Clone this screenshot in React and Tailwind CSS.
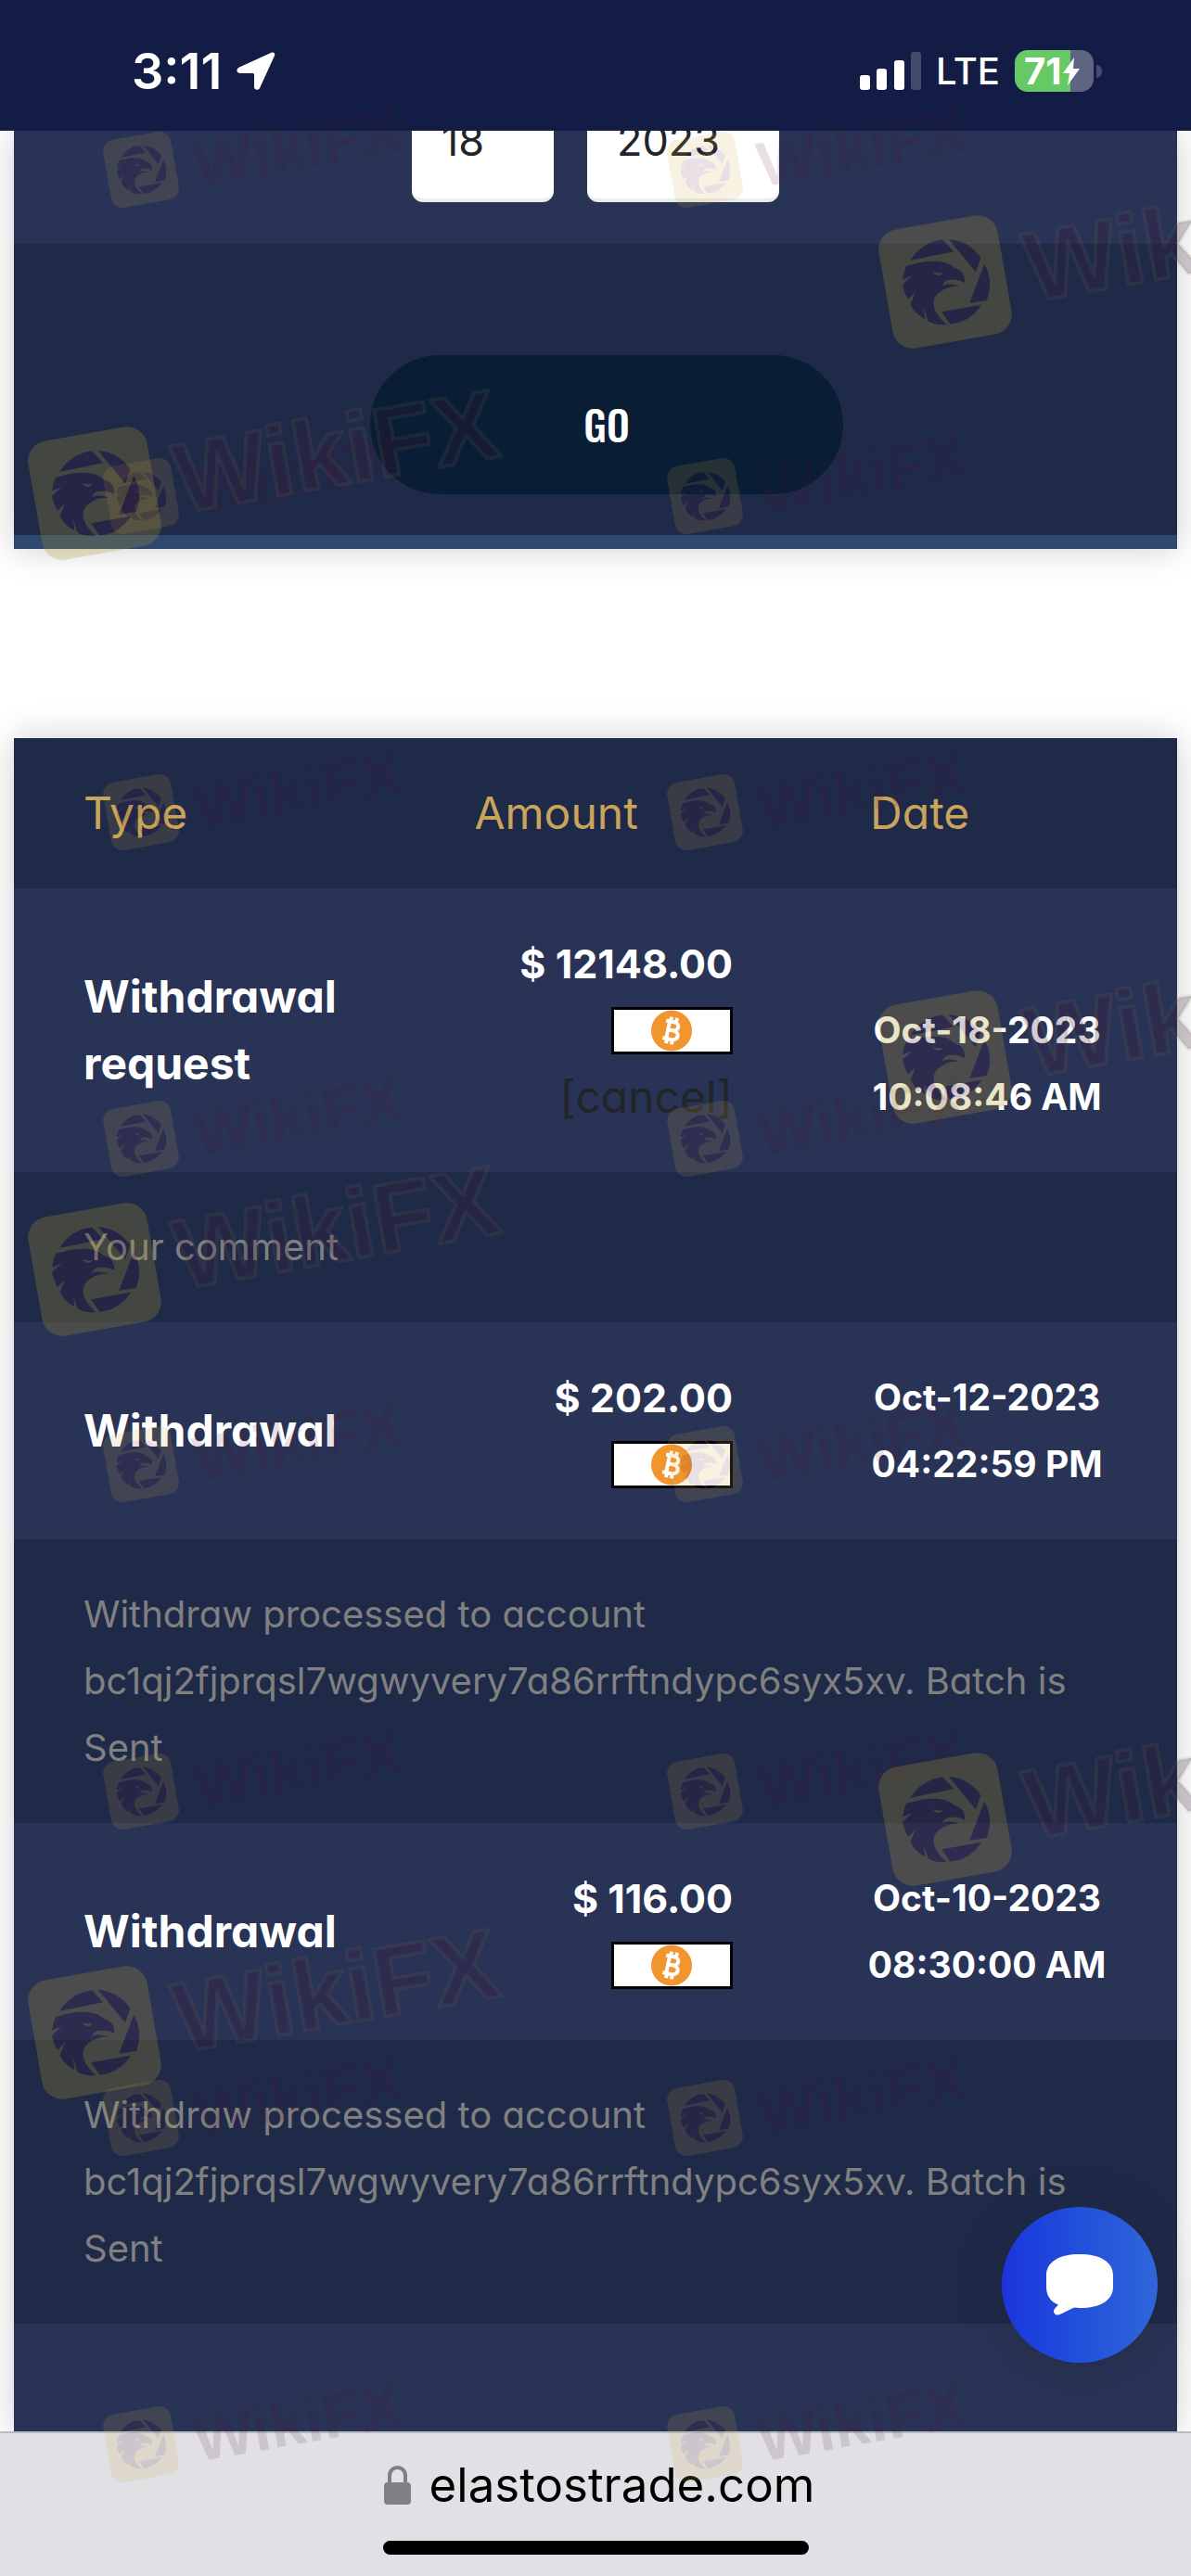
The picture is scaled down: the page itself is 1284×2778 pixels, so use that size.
import { Fragment } from "react";

const withdrawals = [
  {
    type: "Withdrawal request",
    amount: "$ 12148.00",
    date: "Oct-18-2023",
    time: "10:08:46 AM",
    pending: true,
    comment: "Your comment",
  },
  {
    type: "Withdrawal",
    amount: "$ 202.00",
    date: "Oct-12-2023",
    time: "04:22:59 PM",
    comment:
      "Withdraw processed to account bc1qj2fjprqsl7wgwyvery7a86rrftndypc6syx5xv. Batch is Sent",
  },
  {
    type: "Withdrawal",
    amount: "$ 116.00",
    date: "Oct-10-2023",
    time: "08:30:00 AM",
    comment:
      "Withdraw processed to account bc1qj2fjprqsl7wgwyvery7a86rrftndypc6syx5xv. Batch is Sent",
  },
];

const smallMarks = [183, 535, 876, 1228, 1579, 1932, 2284, 2636].flatMap((y) => [
  { x: 152, y },
  { x: 760, y },
]);

const largeMarks = [
  { x: 1019, y: 304 },
  { x: 102, y: 532 },
  { x: 1019, y: 1140 },
  { x: 102, y: 1369 },
  { x: 1019, y: 1962 },
  { x: 102, y: 2192 },
];

function StatusBar() {
  return (
    <header className="flex h-[141px] shrink-0 items-center justify-between bg-[#131c44] pr-24 pl-[142px] pt-3 text-white">
      <div className="flex items-center gap-4">
        <span className="text-[54px] leading-none font-semibold">3:11</span>
        <svg viewBox="0 0 42 42" className="h-[42px] w-[42px]" aria-hidden="true">
          <path
            d="M41 4 25 39c-1.500 3-6 2-6-1V25c0-1.500-.5-2-2-2H4c-4 0-5-4.500-1-6.500L37 1c3-1.200 5 .5 4 3z"
            fill="#fff"
          />
        </svg>
      </div>
      <div className="flex items-center gap-4">
        <svg viewBox="0 0 66 42" className="h-[42px] w-[66px]" aria-hidden="true">
          <rect x="0" y="25" width="11" height="16" rx="3" fill="#fff" />
          <rect x="18" y="18" width="11" height="23" rx="3" fill="#fff" />
          <rect x="37" y="9" width="11" height="32" rx="3" fill="#fff" />
          <rect x="55" y="0" width="11" height="41" rx="3" fill="#454b6b" />
        </svg>
        <span className="text-[40px] leading-none font-medium">LTE</span>
        <div className="flex items-center gap-[3px]">
          <div className="flex h-[45px] w-[85px] items-center rounded-[14px] bg-[linear-gradient(90deg,#66c966_71%,#5f6482_71%)] pl-2.5">
            <span className="text-[40px] leading-none font-bold">71</span>
            <svg viewBox="0 0 20 30" className="h-[30px] w-5 shrink-0" aria-hidden="true">
              <path d="M13 0 1 17h7L6 30 19 12h-7z" fill="#fff" />
            </svg>
          </div>
          <span className="h-[14px] w-[6px] rounded-r-full bg-[#454b6b]" />
        </div>
      </div>
    </header>
  );
}

function DateForm() {
  return (
    <form
      className="mx-[15px] shadow-[0_0_36px_rgba(0,0,0,0.2)]"
      onSubmit={(e) => e.preventDefault()}
    >
      <div className="flex h-[122px] items-end justify-center gap-9 overflow-hidden bg-[#293356] pb-[45px]">
        <select
          aria-label="Day"
          defaultValue="18"
          className="h-32 w-[153px] shrink-0 appearance-none rounded-xl border-b-4 border-[#ececec] bg-white pl-8 text-[45px] text-[#212529]"
        >
          <option>18</option>
        </select>
        <select
          aria-label="Year"
          defaultValue="2023"
          className="h-32 w-[207px] shrink-0 appearance-none rounded-xl border-b-4 border-[#ececec] bg-white pl-8 text-[45px] text-[#212529]"
        >
          <option>2023</option>
        </select>
      </div>
      <div className="flex justify-center border-b-[15px] border-[#2f486f] bg-[#1f2a49] pt-[120px] pb-11 pl-6">
        <button
          type="submit"
          className="h-[150px] w-[510px] rounded-full bg-[#091d35] font-['Oswald','Liberation_Sans_Narrow','Roboto_Condensed',sans-serif] text-[44px] font-medium text-white"
        >
          GO
        </button>
      </div>
    </form>
  );
}

function BitcoinBadge() {
  return (
    <svg viewBox="0 0 131 51" className="h-[51px] w-[131px]" role="img" aria-label="Bitcoin">
      <rect x="1.500" y="1.500" width="128" height="48" fill="#fff" stroke="#000" strokeWidth="3" />
      <circle cx="65" cy="25.500" r="22" fill="#f2952f" />
      <g transform="rotate(12 65 25.500)" fill="none" stroke="#fff" strokeWidth="4">
        <path d="M57 16h9c7 0 7 9 0 9h-5m5 0c9 0 9 10 0 10h-9M61 16v19M62 11v5M68 11v5M62 35v5M68 35v5" />
      </g>
    </svg>
  );
}

function HistoryTable() {
  return (
    <section className="mx-[15px] mt-[204px] flex-1 bg-[#293356] shadow-[0_0_36px_rgba(0,0,0,0.2)]">
      <table className="w-full table-fixed border-collapse leading-[72px]">
        <colgroup>
          <col className="w-[36%]" />
          <col className="w-[29%]" />
          <col className="w-[35%]" />
        </colgroup>
        <thead className="bg-[#1f2a49] text-left text-[48px] text-[#c9a45c]">
          <tr>
            <th className="py-[45px] pl-[75px] font-normal">Type</th>
            <th className="px-[45px] py-[45px] font-normal">Amount</th>
            <th className="py-[45px] pl-[108px] font-normal">Date</th>
          </tr>
        </thead>
        <tbody>
          {withdrawals.map((item) => (
            <Fragment key={item.date}>
              <tr className="bg-[#293356] text-white">
                <td className="py-[45px] pr-20 pl-[75px] align-middle text-[48px] font-bold">
                  {item.type}
                </td>
                <td className="py-[45px] pr-10 text-right align-middle">
                  <div className="text-[43px] font-bold">{item.amount}</div>
                  <div className="flex h-[72px] items-center justify-end">
                    <BitcoinBadge />
                  </div>
                  {item.pending && (
                    <div className="text-[48px]">
                      <a href="#cancel" className="text-[#212529]">
                        [cancel]
                      </a>
                    </div>
                  )}
                </td>
                <td className="py-[45px] pr-[75px] pl-[104px] text-center align-bottom text-[39px] font-bold whitespace-nowrap">
                  <div>{item.date}</div>
                  <div>{item.time}</div>
                </td>
              </tr>
              <tr className="bg-[#1f2a49] text-[#808080]">
                <td colSpan={3} className="px-[75px] py-[45px] text-[40px]">
                  {item.comment}
                </td>
              </tr>
            </Fragment>
          ))}
        </tbody>
      </table>
    </section>
  );
}

function ChatButton() {
  return (
    <button
      type="button"
      aria-label="Open chat"
      className="absolute right-9 bottom-[230px] flex h-[168px] w-[168px] items-center justify-center rounded-full bg-linear-to-r from-[#1c34dc] to-[#2f66d9] shadow-[0_6px_60px_rgba(0,0,0,0.14)]"
    >
      <svg viewBox="0 0 72 66" className="h-[66px] w-[72px]" aria-hidden="true">
        <path
          d="M36 0C58 0 72 8 72 23v12c0 15-14 23-36 23-2 0-4 0-6-.4L15 64.800c-5 2.600-9-2.200-6-6l4-4.400C4 51 0 44 0 35V23C0 8 14 0 36 0z"
          fill="#fff"
        />
      </svg>
    </button>
  );
}

function AddressBar() {
  return (
    <footer className="flex h-[156px] shrink-0 flex-col items-center border-t-2 border-[#b9b9c0] bg-[#e1e1e5] pt-[26px]">
      <div className="flex items-center gap-5 pl-2 text-[51px] leading-[60px] text-black">
        <svg viewBox="0 0 29 42" className="h-[42px] w-[29px]" aria-hidden="true">
          <path d="M6 20V11C6 -1 23 -1 23 11v9" fill="none" stroke="#808085" strokeWidth="4" />
          <rect x="0" y="18" width="29" height="24" rx="4" fill="#808085" />
        </svg>
        <span>elastostrade.com</span>
      </div>
      <div className="mt-[30px] h-[15px] w-[459px] rounded-full bg-black" />
    </footer>
  );
}

function Mark({ x, y, scale, tile, ink, edge, textX, textY, textSize }) {
  return (
    <g transform={`translate(${x} ${y}) scale(${scale})`}>
      <g mask="url(#eagle-cutout)">
        <rect x="-65" y="-65" width="130" height="130" rx="22" transform="rotate(-10)" fill={tile} />
      </g>
      <use href="#eagle" fill={ink} />
      <text
        x={textX}
        y={textY}
        transform="rotate(-10)"
        fontSize={textSize}
        fontWeight="700"
        fill={ink}
        stroke={edge}
        strokeWidth="4"
        strokeLinejoin="round"
      >
        WikiFX
      </text>
    </g>
  );
}

function Watermarks() {
  return (
    <svg
      className="pointer-events-none absolute inset-0 h-full w-full font-['Liberation_Sans',sans-serif]"
      aria-hidden="true"
    >
      <defs>
        <g id="eagle" transform="scale(0.333)">
          <path d="M-113-70A139 139 0 0 1-8-137L27-98z" />
          <path d="M12-138A139 139 0 0 1 115-78L99-32z" />
          <path d="M127-57A139 139 0 0 1 134 60L79 68z" />
          <path d="M117 74A139 139 0 0 1 16 137L-11 97z" />
          <path
            fillRule="evenodd"
            d="M-125-52C-95-58-70-68-40-67C-15-67 8-64 28-46C52-40 66-24 63 3C48-7 28-10 8-6C0-3-5 2-9 12C15 4 28 8 46 15C20 12 2 20-14 30C-48 52-48 92 4 138C-18 141-38 136-55 127L-70 82L-65 120C-88 108-104 92-112 72L-96 32L-120 56C-128 42-134 28-138 8L-106-20L-137-8C-136-24-132-38-125-52zM-42-34C-30-18-14-18-6-30C-18-28-30-30-42-34z"
          />
        </g>
        <mask id="eagle-cutout" maskUnits="userSpaceOnUse" x="-80" y="-80" width="160" height="160">
          <rect x="-80" y="-80" width="160" height="160" fill="#fff" />
          <use href="#eagle" fill="#000" />
        </mask>
      </defs>
      {smallMarks.map((m) => (
        <Mark
          key={`${m.x}-${m.y}`}
          x={m.x}
          y={m.y}
          scale={0.57}
          tile="rgba(205,170,60,0.15)"
          ink="rgba(75,18,50,0.13)"
          edge="none"
          textX={100}
          textY={51}
          textSize={120}
        />
      ))}
      {largeMarks.map((m) => (
        <Mark
          key={`${m.x}-${m.y}`}
          x={m.x}
          y={m.y}
          scale={1}
          tile="rgba(172,150,48,0.26)"
          ink="rgba(60,22,55,0.22)"
          edge="rgba(120,130,80,0.12)"
          textX={88}
          textY={37}
          textSize={106}
        />
      ))}
    </svg>
  );
}

export default function App() {
  return (
    <div className="relative flex min-h-screen flex-col overflow-hidden bg-white font-['Inter',sans-serif]">
      <StatusBar />
      <main className="flex flex-1 flex-col overflow-hidden [font-feature-settings:'cv11']">
        <DateForm />
        <HistoryTable />
      </main>
      <AddressBar />
      <ChatButton />
      <Watermarks />
    </div>
  );
}
